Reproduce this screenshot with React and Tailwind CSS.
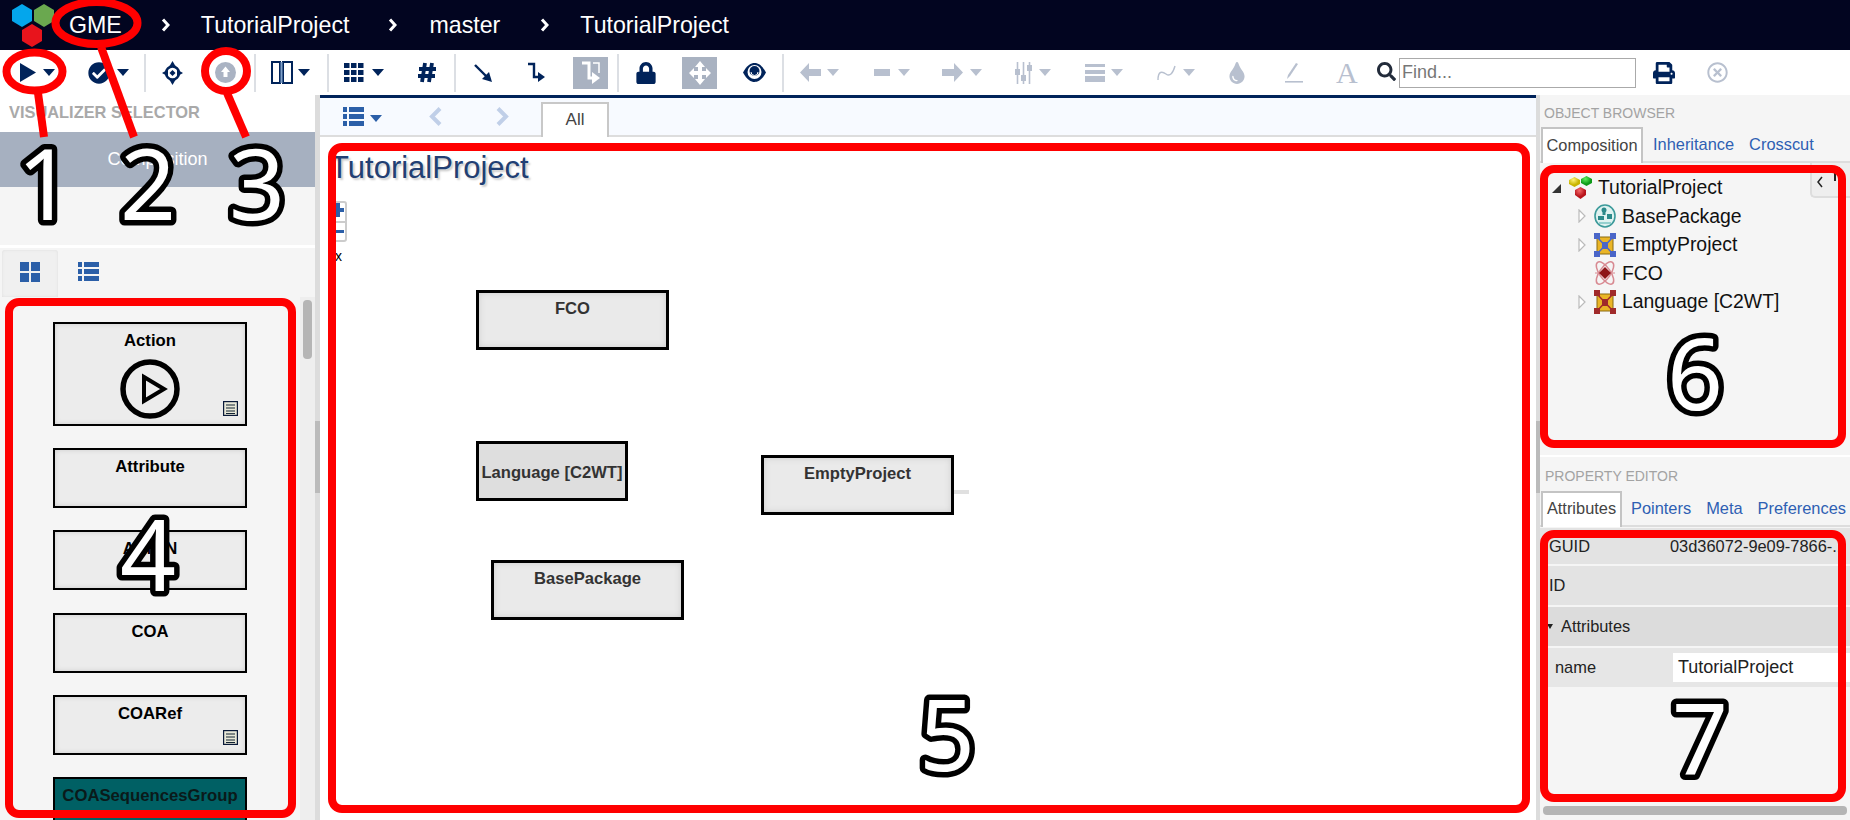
import { FaCheckCircle, FaLock, FaPrint, FaTint, FaSearch, FaRegTimesCircle } from "react-icons/fa";

const NAVY = "#00235a";
const MUTED = "#b8c0cf";

const Caret = ({ color = NAVY, className = "" }) => (
  <svg width="12" height="7" viewBox="0 0 12 7" className={className}>
    <polygon points="0,0 12,0 6,7" fill={color} />
  </svg>
);

const Divider = ({ className = "" }) => <div className={`w-[2px] h-[38px] bg-[#dcdfe4] ${className}`} />;

const Hexagon = ({ x, y, fill }) => (
  <polygon
    points={`${x + 10},${y} ${x + 20},${y + 6} ${x + 20},${y + 17} ${x + 10},${y + 23} ${x},${y + 17} ${x},${y + 6}`}
    fill={fill}
  />
);

const Chevron = () => (
  <svg width="9" height="14" viewBox="0 0 9 14">
    <path d="M2 1.5 L7 7 L2 12.5" fill="none" stroke="#fff" strokeWidth="3" />
  </svg>
);

const Logo = () => (
  <svg width="54" height="48" viewBox="0 0 54 48" className="absolute left-0 top-0">
    <g style={{ filter: "blur(0.5px)" }}>
      <Hexagon x={12} y={4} fill="#04a6ec" />
      <Hexagon x={34} y={4} fill="#6aa84f" />
      <Hexagon x={22} y={24} fill="#e8141c" />
    </g>
  </svg>
);

const Crosshair = ({ className }) => (
  <svg width="21" height="24" viewBox="0 0 21 24" className={className}>
    <circle cx="10.5" cy="12" r="6.5" fill="none" stroke={NAVY} strokeWidth="2.5" />
    <polygon points="10.5,0 14,6 7,6" fill={NAVY} />
    <polygon points="10.5,24 14,18 7,18" fill={NAVY} />
    <polygon points="0,12 6,8.5 6,15.5" fill={NAVY} />
    <polygon points="21,12 15,8.5 15,15.5" fill={NAVY} />
    <polygon points="10.5,9 13.5,12 10.5,15 7.5,12" fill={NAVY} />
  </svg>
);

const UploadCircle = ({ className }) => (
  <svg width="21" height="21" viewBox="0 0 21 21" className={className}>
    <circle cx="10.5" cy="10.5" r="10.5" fill="#aab3c3" />
    <path d="M10.5 4.5 L15 10 H12.5 V15 H8.5 V10 H6 Z" fill="#fff" />
  </svg>
);

const Columns = ({ className }) => (
  <svg width="22" height="23" viewBox="0 0 22 23" className={className}>
    <rect x="1" y="1" width="8" height="21" fill="none" stroke={NAVY} strokeWidth="2" />
    <rect x="12" y="1" width="9" height="21" fill="none" stroke={NAVY} strokeWidth="2" />
    <rect x="9.5" y="1" width="2" height="21" fill="#7fa0c8" />
  </svg>
);

const Grid = ({ className }) => (
  <svg width="20" height="19" viewBox="0 0 20 19" className={className}>
    {[0, 7, 14].map((y) =>
      [0, 7, 14].map((x) => <rect key={`${x}-${y}`} x={x} y={y} width="5.5" height="5" fill={NAVY} />),
    )}
  </svg>
);

const Hash = ({ className }) => (
  <svg width="20" height="21" viewBox="0 0 20 21" className={className}>
    <path d="M8 1 L5 20 M15 1 L12 20 M2 7 H19 M1 14 H18" fill="none" stroke={NAVY} strokeWidth="3.8" />
  </svg>
);

const DiagArrow = ({ className }) => (
  <svg width="18" height="18" viewBox="0 0 18 18" className={className}>
    <path d="M1 1 L12 12" stroke={NAVY} strokeWidth="2.4" />
    <polygon points="18,18 8,15 15,8" fill={NAVY} />
  </svg>
);

const Elbow = ({ className }) => (
  <svg width="17" height="21" viewBox="0 0 17 21" className={className}>
    <path d="M0 2 H6 V15 H11" fill="none" stroke={NAVY} strokeWidth="2.4" />
    <polygon points="17,15 10,10 10,20" fill={NAVY} />
  </svg>
);

const ElbowActive = () => (
  <div className="w-[35px] h-[32px] bg-[#a9b2c1] flex items-center justify-center ml-[28px]">
    <svg width="20" height="24" viewBox="0 0 20 24">
      <path d="M1 2 H8 V17 H12" fill="none" stroke="#fff" strokeWidth="3" />
      <path d="M12 2 H18 V12" fill="none" stroke="#fff" strokeWidth="1.5" />
      <polygon points="19,17 11,11 11,23" fill="#fff" />
    </svg>
  </div>
);

const MoveActive = () => (
  <div className="w-[35px] h-[32px] bg-[#a9b2c1] flex items-center justify-center ml-[25px]">
    <svg width="22" height="24" viewBox="0 0 22 24">
      <path d="M11 0 L16 6 H13 V10 H17 V7 L22 12 L17 17 V14 H13 V18 H16 L11 24 L6 18 H9 V14 H5 V17 L0 12 L5 7 V10 H9 V6 H6 Z" fill="#fff" />
    </svg>
  </div>
);

const Eye = ({ className }) => (
  <svg width="23" height="19" viewBox="0 0 23 19" className={className}>
    <path d="M0 9.5 C4 2 8 0 11.5 0 C15 0 19 2 23 9.5 C19 17 15 19 11.5 19 C8 19 4 17 0 9.5 Z" fill={NAVY} />
    <circle cx="11.5" cy="9" r="7" fill="#fff" />
    <circle cx="11.5" cy="8" r="5" fill={NAVY} />
    <path d="M8 9 A3.5 3.5 0 0 0 15 9" fill="none" stroke="#fff" strokeWidth="1" />
  </svg>
);

const LeftArrow = ({ className }) => (
  <svg width="21" height="19" viewBox="0 0 21 19" className={className}>
    <path d="M0 9.5 L9 0 V6 H21 V13 H9 V19 Z" fill={MUTED} />
  </svg>
);

const RightArrow = ({ className }) => (
  <svg width="21" height="19" viewBox="0 0 21 19" className={className}>
    <path d="M21 9.5 L12 0 V6 H0 V13 H12 V19 Z" fill={MUTED} />
  </svg>
);

const MinusBar = ({ className }) => <div className={`w-[16px] h-[7px] bg-[#b8c0cf] ${className}`} />;

const Sliders = ({ className }) => (
  <svg width="17" height="22" viewBox="0 0 17 22" className={className}>
    <path d="M2.5 0 V22 M8.5 0 V22 M14.5 0 V22" stroke={MUTED} strokeWidth="1.6" />
    <rect x="0" y="7" width="5" height="6" fill={MUTED} />
    <rect x="6" y="13" width="5" height="6" fill={MUTED} />
    <rect x="12" y="3" width="5" height="6" fill={MUTED} />
  </svg>
);

const Lines = ({ className }) => (
  <svg width="20" height="18" viewBox="0 0 20 18" className={className}>
    <rect y="0" width="20" height="3" fill={MUTED} />
    <rect y="6" width="20" height="4" fill={MUTED} />
    <rect y="12" width="20" height="6" fill={MUTED} />
  </svg>
);

const Wave = ({ className }) => (
  <svg width="19" height="16" viewBox="0 0 19 16" className={className}>
    <path d="M1 15 C1 6 5 6 9 9 C13 12 16 8 18 1" fill="none" stroke={MUTED} strokeWidth="1.4" />
  </svg>
);

const Pen = ({ className }) => (
  <svg width="18" height="20" viewBox="0 0 18 20" className={className}>
    <path d="M13 1 L5 13 L2 16 L3 12 L11 0 Z" fill={MUTED} />
    <rect y="18" width="18" height="1.6" fill={MUTED} />
  </svg>
);

function Toolbar() {
  return (
    <div className="h-[45px] bg-white flex items-center">
      <svg width="16" height="19" viewBox="0 0 16 19" className="ml-[20px]">
        <polygon points="0,0 16,9.5 0,19" fill={NAVY} />
      </svg>
      <Caret className="ml-[7px]" />
      <FaCheckCircle size={22} color={NAVY} className="ml-[33px]" />
      <Caret className="ml-[7px]" />
      <Divider className="ml-[15px]" />
      <Crosshair className="ml-[16px]" />
      <UploadCircle className="ml-[32px]" />
      <Divider className="ml-[18px]" />
      <Columns className="ml-[15px]" />
      <Caret className="ml-[5px]" />
      <Divider className="ml-[17px]" />
      <Grid className="ml-[15px]" />
      <Caret className="ml-[8px]" />
      <Hash className="ml-[33px]" />
      <Divider className="ml-[17px]" />
      <DiagArrow className="ml-[18px]" />
      <Elbow className="ml-[36px]" />
      <ElbowActive />
      <Divider className="ml-[9px]" />
      <FaLock size={22} color={NAVY} className="ml-[16px]" />
      <MoveActive />
      <Eye className="ml-[26px]" />
      <Divider className="ml-[16px]" />
      <LeftArrow className="ml-[16px]" />
      <Caret color={MUTED} className="ml-[6px]" />
      <MinusBar className="ml-[35px]" />
      <Caret color={MUTED} className="ml-[8px]" />
      <RightArrow className="ml-[32px]" />
      <Caret color={MUTED} className="ml-[7px]" />
      <Sliders className="ml-[33px]" />
      <Caret color={MUTED} className="ml-[7px]" />
      <Lines className="ml-[34px]" />
      <Caret color={MUTED} className="ml-[6px]" />
      <Wave className="ml-[34px]" />
      <Caret color={MUTED} className="ml-[7px]" />
      <FaTint size={22} color={MUTED} className="ml-[31px]" />
      <Pen className="ml-[37px]" />
      <span className="ml-[33px] w-[21px] text-[30px] leading-none text-[#b8c0cf] font-['Liberation_Serif',serif]">A</span>
      <FaSearch size={19} color="#222b3a" className="ml-[20px] -mt-[3px]" />
      <input
        readOnly
        placeholder="Find..."
        className="ml-[3px] w-[237px] h-[30px] border border-[#aaa] px-[2px] text-[18px] placeholder:text-[#777] outline-none"
      />
      <FaPrint size={22} color={NAVY} className="ml-[17px]" />
      <FaRegTimesCircle size={21} color={MUTED} className="ml-[32px]" />
    </div>
  );
}

const SmallList = () => (
  <svg width="15" height="15" viewBox="0 0 15 15" className="absolute right-[7px] bottom-[8px]">
    <rect x="0.5" y="0.5" width="14" height="14" fill="#e8e8d8" stroke="#0a1a3a" strokeWidth="1.4" />
    <path d="M3 4 H12 M3 7 H12 M3 10 H12 M3 12.5 H12" stroke="#123" strokeWidth="1" />
  </svg>
);

const PaletteCard = ({ label, small, tall, teal }) => (
  <div
    className={`relative w-[194px] shrink-0 border-2 border-black text-center font-bold text-[16.7px] pt-[7px] leading-[20px] ${
      tall ? "h-[104px]" : "h-[60px]"
    } ${teal ? "bg-[#006064] text-[#0a1a1a]" : "bg-[#ececec] shadow-[inset_0_0_5px_#ccc] text-black"}`}
  >
    {label}
    {tall && (
      <svg width="60" height="60" viewBox="0 0 60 60" className="absolute left-[65px] top-[35px]">
        <circle cx="30" cy="30" r="27" fill="none" stroke="#000" strokeWidth="5.5" />
        <polygon points="24,18 44,30 24,42" fill="none" stroke="#000" strokeWidth="4" />
      </svg>
    )}
    {small && <SmallList />}
  </div>
);

function LeftPanel() {
  return (
    <div className="w-[315px] flex flex-col bg-[#f5f5f5]">
      <div className="h-[37px] bg-white pl-[9px] pt-[7px] font-bold text-[16.4px] text-[#a9a9a9] leading-[20px]">
        VISUALIZER SELECTOR
      </div>
      <div className="h-[55px] bg-[#a6b0c0] text-white text-[18px] flex items-center justify-center">Composition</div>
      <div className="h-[58px] bg-[#f5f5f5]" />
      <div className="h-[3px] bg-white" />
      <div className="h-[49px] flex items-start">
        <div className="ml-[2px] mt-[2px] w-[56px] h-[47px] bg-[#f0f0f0] rounded-t-[3px] shadow-[inset_0_0_3px_#ddd] flex justify-center pt-[12px]">
          <svg width="20" height="20" viewBox="0 0 20 20">
            <rect width="9" height="9" fill="#2b5fa8" />
            <rect x="11" width="9" height="9" fill="#2b5fa8" />
            <rect y="11" width="9" height="9" fill="#2b5fa8" />
            <rect x="11" y="11" width="9" height="9" fill="#2b5fa8" />
          </svg>
        </div>
        <svg width="21" height="20" viewBox="0 0 21 20" className="ml-[20px] mt-[14px]">
          {[0, 7, 14].map((y) => (
            <g key={y}>
              <rect y={y} width="4" height="5" fill="#2b5fa8" />
              <rect x="6" y={y} width="15" height="5" fill="#2b5fa8" />
            </g>
          ))}
        </svg>
      </div>
      <div className="flex-1 flex overflow-hidden">
        <div className="w-[300px] flex flex-col items-center gap-[22.2px] pt-[25px] overflow-hidden">
          <PaletteCard label="Action" tall small />
          <PaletteCard label="Attribute" />
          <PaletteCard label="ADMIN" />
          <PaletteCard label="COA" />
          <PaletteCard label="COARef" small />
          <PaletteCard label="COASequencesGroup" teal />
        </div>
        <div className="w-[15px] bg-[#eeeeee] pt-[3px] flex justify-center">
          <div className="w-[9px] h-[59px] rounded-[4px] bg-[#b5b5b5]" />
        </div>
      </div>
    </div>
  );
}

const CanvasCard = ({ label, className, center }) => (
  <div
    className={`absolute border-[3px] border-black font-bold text-[16.6px] text-[#333] text-center leading-[20px] ${
      center ? "bg-[#dedede] flex items-center justify-center pt-[3px]" : "bg-[#eaeaea] shadow-[inset_0_0_6px_#ccc] pt-[6px]"
    } ${className}`}
  >
    {label}
  </div>
);

function CenterPanel() {
  return (
    <div className="w-[1216px] flex flex-col">
      <div className="h-[3px] bg-[#00235a]" />
      <div className="h-[39px] bg-[#f7faff] border-b-2 border-[#dddddd] flex items-start">
        <svg width="21" height="19" viewBox="0 0 21 19" className="ml-[23px] mt-[9px]">
          {[0, 7, 14].map((y) => (
            <g key={y}>
              <rect y={y} width="4" height="5" fill="#2b5fa8" />
              <rect x="6" y={y} width="15" height="5" fill="#2b5fa8" />
            </g>
          ))}
        </svg>
        <Caret color="#2b5fa8" className="ml-[6px] mt-[17px]" />
        <svg width="13" height="19" viewBox="0 0 13 19" className="ml-[47px] mt-[9px]">
          <path d="M11 1.5 L3 9.5 L11 17.5" fill="none" stroke="#c0cfe8" strokeWidth="4" />
        </svg>
        <svg width="13" height="19" viewBox="0 0 13 19" className="ml-[54px] mt-[9px]">
          <path d="M2 1.5 L10 9.5 L2 17.5" fill="none" stroke="#c0cfe8" strokeWidth="4" />
        </svg>
        <div className="ml-[32px] mt-[4px] w-[68px] h-[35px] bg-white border-2 border-b-0 border-[#c8c8c8] text-center text-[17px] leading-[32px] text-[#444]">
          All
        </div>
      </div>
      <div className="relative flex-1 bg-white overflow-hidden">
        <div className="absolute left-[10px] top-[9px] text-[31px] leading-[44px] text-[#223f73] [text-shadow:2px_2px_2px_#ccc]">
          TutorialProject
        </div>
        <div className="absolute left-[8px] top-[64px] w-[19px] h-[41px] border-2 border-[#ccc] rounded-[3px] bg-white flex flex-col">
          <div className="relative h-[20px] border-b-2 border-[#ccc]">
            <div className="absolute left-[1px] top-[5px] w-[13px] h-[4px] bg-[#2b5fa8]" />
            <div className="absolute left-[6px] top-[0px] w-[4px] h-[14px] bg-[#2b5fa8]" />
          </div>
          <div className="relative flex-1">
            <div className="absolute left-[3px] top-[7px] w-[11px] h-[3px] bg-[#2b5fa8]" />
          </div>
        </div>
        <div className="absolute left-[15px] top-[111px] text-[14px] leading-[16px] text-black">x</div>
        <CanvasCard label="FCO" className="left-[156px] top-[153px] w-[193px] h-[60px]" />
        <CanvasCard label="Language [C2WT]" center className="left-[156px] top-[304px] w-[152px] h-[60px]" />
        <CanvasCard label="EmptyProject" className="left-[441px] top-[318px] w-[193px] h-[60px]" />
        <div className="absolute left-[634px] top-[353px] w-[15px] h-[4px] bg-[#e0e0e0]" />
        <CanvasCard label="BasePackage" className="left-[171px] top-[423px] w-[193px] h-[60px]" />
      </div>
    </div>
  );
}

const RootIcon = () => (
  <svg width="23" height="24" viewBox="0 0 23 24">
    <defs>
      <radialGradient id="gy" cx="0.4" cy="0.3">
        <stop offset="0" stopColor="#fff27a" />
        <stop offset="1" stopColor="#c8b400" />
      </radialGradient>
      <radialGradient id="gg" cx="0.4" cy="0.3">
        <stop offset="0" stopColor="#5cf05c" />
        <stop offset="1" stopColor="#0f9a1a" />
      </radialGradient>
      <radialGradient id="gr" cx="0.4" cy="0.3">
        <stop offset="0" stopColor="#f56a6a" />
        <stop offset="1" stopColor="#b8141c" />
      </radialGradient>
    </defs>
    <polygon points="5.5,1 11,4 11,8 5.5,11 0,8 0,4" fill="url(#gy)" />
    <polygon points="17.5,0 23,3 23,7 17.5,10 12,7 12,3" fill="url(#gg)" />
    <polygon points="11.5,11 17,14 17,19 11.5,23 6,19 6,14" fill="url(#gr)" />
  </svg>
);

const PackageIcon = () => (
  <svg width="22" height="24" viewBox="0 0 22 24">
    <ellipse cx="11" cy="12" rx="10" ry="11" fill="#dff2f0" stroke="#3c9a9a" strokeWidth="1.6" />
    <circle cx="10" cy="6" r="2.5" fill="#2b8a8a" />
    <rect x="8.5" y="6" width="3" height="5" fill="#2b8a8a" />
    <rect x="4" y="12" width="6" height="4" fill="#2b8a8a" />
    <rect x="13" y="10" width="5" height="5" fill="#2b8a8a" />
    <path d="M5 19 H17" stroke="#7cc4c4" strokeWidth="1.5" />
  </svg>
);

const ModelIcon = ({ corner }) => (
  <svg width="22" height="24" viewBox="0 0 22 24">
    <rect x="3" y="4" width="16" height="17" fill="#eab526" stroke="#8a6a10" />
    <path d="M3 4 L19 21 M19 4 L3 21" stroke={corner} strokeWidth="1.5" />
    <rect x="8" y="9" width="6" height="7" fill={corner} />
    <rect x="0" y="0" width="6" height="6" fill={corner} />
    <rect x="16" y="0" width="6" height="6" fill={corner} />
    <rect x="0" y="18" width="6" height="6" fill={corner} />
    <rect x="16" y="18" width="6" height="6" fill={corner} />
  </svg>
);

const AtomIcon = () => (
  <svg width="22" height="26" viewBox="0 0 22 26" className="overflow-visible">
    <ellipse cx="11" cy="13" rx="13" ry="5.5" fill="none" stroke="#d88a92" strokeWidth="1.5" transform="rotate(55 11 13)" />
    <ellipse cx="11" cy="13" rx="13" ry="5.5" fill="none" stroke="#d88a92" strokeWidth="1.5" transform="rotate(-55 11 13)" />
    <path d="M1 13 H21" stroke="#d88a92" strokeWidth="1" />
    <polygon points="11,7 17,13 11,19 5,13" fill="#8e1418" />
  </svg>
);

const Expander = () => (
  <svg width="8" height="14" viewBox="0 0 8 14">
    <polygon points="1,1 7,7 1,13" fill="#fff" stroke="#bbb" strokeWidth="1.2" />
  </svg>
);

const TreeRow = ({ icon, label, expand }) => (
  <div className="h-[28.5px] flex items-center pl-[38px] text-[19.4px] text-[#111]">
    <div className="w-[8px]">{expand && <Expander />}</div>
    <div className="ml-[8px] w-[22px] flex">{icon}</div>
    <span className="ml-[6px]">{label}</span>
  </div>
);

function RightPanel() {
  return (
    <div className="flex-1 bg-[#f5f5f5] flex flex-col overflow-hidden">
      <div className="h-[32px] pl-[4px] pt-[10px] text-[14px] leading-[16px] text-[#a3a3a3]">OBJECT BROWSER</div>
      <div className="h-[36px] border-b-2 border-[#dddddd] flex items-start text-[16.4px]">
        <div className="ml-[1px] w-[102px] h-[36px] bg-white border-2 border-b-0 border-[#c4c4c4] text-center leading-[32px] text-[#444]">
          Composition
        </div>
        <span className="ml-[10px] leading-[35px] text-[#2e5fb3]">Inheritance</span>
        <span className="ml-[15px] leading-[35px] text-[#2e5fb3]">Crosscut</span>
      </div>
      <div className="relative h-[292px] pt-[11px]">
        <div className="h-[28px] flex items-center pl-[12px] text-[19.4px] text-[#111]">
          <svg width="9" height="9" viewBox="0 0 9 9">
            <polygon points="9,0 9,9 0,9" fill="#333" />
          </svg>
          <div className="ml-[8px] flex">
            <RootIcon />
          </div>
          <span className="ml-[6px]">TutorialProject</span>
        </div>
        <TreeRow expand icon={<PackageIcon />} label="BasePackage" />
        <TreeRow expand icon={<ModelIcon corner="#4a66c8" />} label="EmptyProject" />
        <TreeRow icon={<AtomIcon />} label="FCO" />
        <TreeRow expand icon={<ModelIcon corner="#a02a2a" />} label="Language [C2WT]" />
        <div className="absolute right-0 top-0 w-[40px] h-[35px] bg-[#eeeeee] border-b-2 border-l-2 border-[#ddd] rounded-bl-[5px] flex items-start">
          <svg width="8" height="12" viewBox="0 0 8 12" className="ml-[4px] mt-[13px]">
            <path d="M6 1 L2 6 L6 11" fill="none" stroke="#222" strokeWidth="1.5" />
          </svg>
          <svg width="10" height="14" viewBox="0 0 10 14" className="ml-[6px] mt-[4px]">
            <polygon points="0,0 10,0 6,6 6,14 4,14 4,6" fill="#222" />
          </svg>
        </div>
      </div>
      <div className="h-[2px] bg-white" />
      <div className="h-[34px] pl-[5px] pt-[11px] text-[14px] leading-[16px] text-[#a3a3a3]">PROPERTY EDITOR</div>
      <div className="h-[36px] border-b-2 border-[#dddddd] flex items-start text-[16.4px]">
        <div className="ml-[1px] w-[81px] h-[36px] bg-white border-2 border-b-0 border-[#c4c4c4] text-center leading-[30px] text-[#444]">
          Attributes
        </div>
        <span className="ml-[9px] leading-[34px] text-[#2e5fb3]">Pointers</span>
        <span className="ml-[15px] leading-[34px] text-[#2e5fb3]">Meta</span>
        <span className="ml-[15px] leading-[34px] text-[#2e5fb3]">Preferences</span>
      </div>
      <div className="mt-[1px] h-[36px] bg-[#e3e3e3] flex items-center pl-[9px] text-[16.4px] text-[#222]">
        <span className="w-[121px]">GUID</span>
        <span className="whitespace-nowrap">03d36072-9e09-7866-...</span>
      </div>
      <div className="mt-[2px] h-[39px] bg-[#e3e3e3] flex items-center pl-[9px] text-[16.4px] text-[#222]">ID</div>
      <div className="mt-[2px] h-[39px] bg-[#dcdcdc] flex items-center pl-[7px] text-[16.4px] text-[#222]">
        <svg width="6" height="5" viewBox="0 0 6 5">
          <polygon points="0,0 6,0 3,5" fill="#222" />
        </svg>
        <span className="ml-[8px]">Attributes</span>
      </div>
      <div className="mt-[2px] h-[39px] bg-[#e6e6e6] flex items-center pl-[15px] text-[16.4px] text-[#222]">
        <span className="w-[118px]">name</span>
        <div className="flex-1 h-[29px] bg-white pl-[5px] text-[18px] leading-[28px] text-[#222]">TutorialProject</div>
      </div>
      <div className="flex-1" />
      <div className="mx-[3px] mb-[5px] h-[9px] rounded-[4px] bg-[#b5b5b5]" />
    </div>
  );
}

const Number = ({ children, x, y }) => (
  <text
    x={x}
    y={y}
    fontFamily="'Noto Sans', sans-serif"
    fontSize="98"
    fill="#fff"
    stroke="#000"
    strokeWidth="11"
    strokeLinejoin="round"
    paintOrder="stroke fill"
  >
    {children}
  </text>
);

const RedBox = ({ className }) => <div className={`absolute border-[8px] border-[#ff0000] rounded-[14px] ${className}`} />;

function Annotations() {
  return (
    <>
      <RedBox className="left-[5px] top-[298px] w-[291px] h-[520px]" />
      <RedBox className="left-[328px] top-[143px] w-[1202px] h-[670px]" />
      <RedBox className="left-[1540px] top-[165px] w-[306px] h-[283px]" />
      <RedBox className="left-[1540px] top-[530px] w-[306px] h-[272px]" />
      <svg width="1850" height="820" viewBox="0 0 1850 820" className="absolute left-0 top-0 pointer-events-none">
        <g fill="none" stroke="#ff0000" strokeWidth="8">
          <ellipse cx="34.5" cy="71.5" rx="28" ry="19" />
          <ellipse cx="96.5" cy="23" rx="41" ry="21" />
          <ellipse cx="226" cy="71" rx="21" ry="20" />
          <path d="M38 93 L44 137" />
          <path d="M101 47 L134 137" />
          <path d="M227 93 L246 137" />
        </g>
        <Number x={17} y={220}>1</Number>
        <Number x={120} y={220}>2</Number>
        <Number x={229} y={220}>3</Number>
        <Number x={120} y={591}>4</Number>
        <Number x={919} y={771}>5</Number>
        <Number x={1667} y={410}>6</Number>
        <Number x={1672} y={775}>7</Number>
      </svg>
    </>
  );
}

export default function App() {
  return (
    <div className="relative w-[1850px] h-[820px] overflow-hidden bg-white font-['Liberation_Sans',Arial,sans-serif]">
      <header className="relative h-[50px] bg-[#020520] text-white text-[23.2px] flex items-center">
        <Logo />
        <span className="ml-[69px]">GME</span>
        <div className="ml-[39px] flex">
          <Chevron />
        </div>
        <span className="ml-[31px]">TutorialProject</span>
        <div className="ml-[39px] flex">
          <Chevron />
        </div>
        <span className="ml-[32px]">master</span>
        <div className="ml-[40px] flex">
          <Chevron />
        </div>
        <span className="ml-[31px]">TutorialProject</span>
      </header>
      <Toolbar />
      <div className="flex h-[725px]">
        <LeftPanel />
        <div className="relative w-[5px] bg-[#dcdcdc]">
          <div className="absolute left-0 top-[326px] w-[5px] h-[72px] bg-[#bbbbbb]" />
        </div>
        <CenterPanel />
        <div className="relative w-[4px] bg-[#dcdcdc]">
          <div className="absolute left-0 top-[326px] w-[4px] h-[72px] bg-[#bbbbbb]" />
        </div>
        <RightPanel />
      </div>
      <Annotations />
    </div>
  );
}
